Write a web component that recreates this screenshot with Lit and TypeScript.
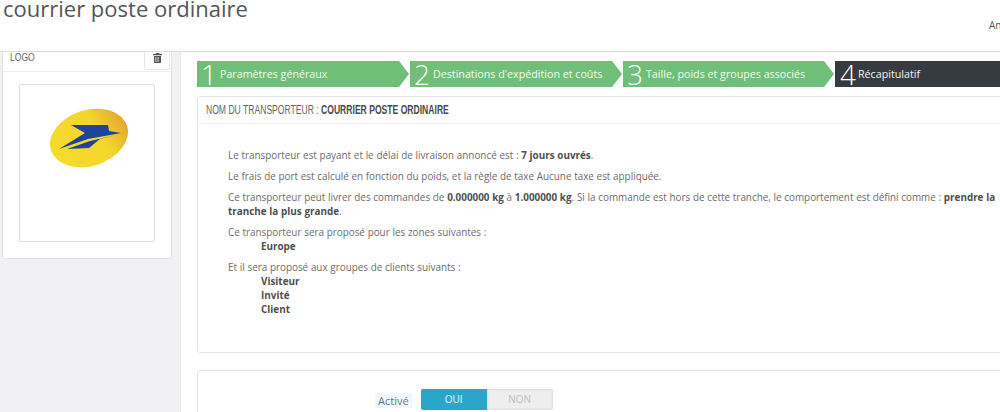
import { LitElement, html, css } from "lit";
import { customElement } from "lit/decorators.js";

@customElement("app-root")
export class AppRoot extends LitElement {
  static styles = css`
    :host {
      display: flex;
      flex-direction: column;
      width: 1000px;
      height: 412px;
      overflow: hidden;
      background: #fff;
      font-family: "Open Sans", sans-serif;
      font-size: 9.9px;
      color: #6c6c6c;
    }
    .top {
      height: 52px;
      flex: none;
      box-sizing: border-box;
      display: flex;
      justify-content: space-between;
      border-bottom: 1px solid #dcdcdc;
      overflow: hidden;
    }
    h1 {
      margin: 0 0 0 3px;
      font-size: 22px;
      line-height: 16px;
      font-weight: 400;
      color: #555;
    }
    .corner {
      width: 11px;
      white-space: nowrap;
      font-size: 10px;
      color: #555;
      padding-top: 18px;
    }
    .body {
      flex: 1;
      display: flex;
      min-height: 0;
    }
    aside {
      width: 181px;
      flex: none;
      box-sizing: border-box;
      background: #f1f1f3;
      border-right: 1px solid #e6e6e6;
      padding-left: 2px;
    }
    .logo-panel {
      width: 170px;
      height: 207px;
      box-sizing: border-box;
      background: #fff;
      border: 1px solid #e2e2e2;
      border-top: 0;
      border-radius: 0 0 3px 3px;
    }
    .logo-head {
      height: 19px;
      display: flex;
      justify-content: space-between;
      align-items: flex-start;
      border-bottom: 1px solid #eee;
      padding-left: 7px;
    }
    .logo-label {
      font-family: "Liberation Sans", sans-serif;
      font-size: 11px;
      line-height: 10px;
      color: #666;
      transform: scaleX(0.78);
      transform-origin: left center;
    }
    .trash {
      width: 24px;
      height: 11px;
      padding-bottom: 6px;
      margin-right: 1px;
      display: flex;
      align-items: center;
      justify-content: center;
      border: 1px solid #e8e8e8;
      border-top: 0;
      border-radius: 0 0 2px 2px;
    }
    .logo-box {
      margin: 12px 0 0 16px;
      width: 136px;
      height: 158px;
      box-sizing: border-box;
      border: 1px solid #dedede;
      border-radius: 2px;
      padding: 21px 0 0 28px;
    }
    .logo-box svg {
      display: block;
    }
    main {
      flex: 1;
      min-width: 0;
      overflow: hidden;
      padding: 9px 0 0 16px;
    }
    .steps {
      display: flex;
      gap: 1px;
      width: 830px;
      height: 26px;
    }
    .step {
      height: 26px;
      flex: none;
      box-sizing: border-box;
      display: flex;
      align-items: center;
      background: #6fbf78;
      color: #f2faf3;
      clip-path: polygon(0 0, calc(100% - 10px) 0, 100% 50%, calc(100% - 10px) 100%, 0 100%);
      font-size: 10.7px;
      padding-left: 4px;
      white-space: nowrap;
    }
    .step b {
      font-weight: 300;
      font-size: 28px;
      line-height: 26px;
      color: #fff;
      margin-right: 3px;
    }
    .step.dark {
      background: #363a41;
      clip-path: none;
      padding-left: 5px;
      color: #f5f5f5;
    }
    .step.dark b {
      margin-right: 2px;
    }
    .panel {
      width: 830px;
      box-sizing: border-box;
      border: 1px solid #e4e4e4;
      border-radius: 3px;
      background: #fff;
    }
    .summary {
      margin-top: 9px;
      height: 257px;
    }
    .panel-head {
      height: 27px;
      box-sizing: border-box;
      display: flex;
      align-items: center;
      padding-left: 8px;
      border-bottom: 1px solid #f0f0f0;
    }
    .panel-title {
      font-family: "Liberation Sans", sans-serif;
      font-size: 12px;
      color: #666;
      white-space: nowrap;
      transform: scaleX(0.715);
      transform-origin: left center;
    }
    .panel-title strong {
      color: #4a4a4a;
    }
    .text {
      padding: 24px 0 0 30px;
      line-height: 14px;
      word-spacing: 0.15px;
    }
    .text p {
      margin: 0 0 7px;
      white-space: nowrap;
    }
    .text strong {
      color: #4f4f4f;
    }
    .indent {
      display: block;
      padding-left: 33px;
    }
    .form {
      margin-top: 17px;
      height: 60px;
      padding: 18px 0 0 177px;
      display: flex;
      align-items: flex-start;
    }
    .label {
      background: #f1f7fb;
      padding: 0 3px;
      height: 15px;
      line-height: 15px;
      margin-top: 4px;
      font-size: 11px;
      color: #5f7d8c;
    }
    .switch {
      display: flex;
      margin-left: 9px;
      width: 132px;
      height: 21px;
      border-radius: 2px;
      overflow: hidden;
      font-size: 10px;
      line-height: 21px;
      text-align: center;
    }
    .yes {
      width: 66px;
      background: #2ba6cb;
      color: #e8f6fa;
    }
    .no {
      width: 66px;
      background: #eeeeee;
      color: #bdbdbd;
      box-shadow: inset 0 0 2px #bbb;
    }
  `;

  render() {
    return html`
      <div class="top">
        <h1>courrier poste ordinaire</h1>
        <div class="corner">An</div>
      </div>
      <div class="body">
        <aside>
          <div class="logo-panel">
            <div class="logo-head">
              <span class="logo-label">LOGO</span>
              <span class="trash">
                <svg width="9" height="10" viewBox="0 0 9 10">
                  <path fill="#555" d="M3 0h3l.5 1H9v1.200H0V1h2.500zM1 3h7v6.200q0 .8-.8.8H1.800q-.8 0-.8-.8zm1.500 1v5h.8V4zm2.200 0v5h.8V4z" />
                </svg>
              </span>
            </div>
            <div class="logo-box">
              <svg width="82" height="64" viewBox="0 0 82 64">
                <defs>
                  <linearGradient id="g" x1="0" x2="1" y1="0.6" y2="0.4">
                    <stop offset="0" stop-color="#f5dc2a" />
                    <stop offset="0.65" stop-color="#f3d62c" />
                    <stop offset="1" stop-color="#e2a632" />
                  </linearGradient>
                </defs>
                <ellipse cx="41" cy="32" rx="40" ry="28" transform="rotate(-18 41 32)" fill="url(#g)" />
                <path fill="#1d439c" d="M23 19H60L61 25L73 27L40 33L11 43L37 27ZM19 43L42 35L68 29L52 33L41 42Z" />
              </svg>
            </div>
          </div>
        </aside>
        <main>
          <div class="steps">
            <div class="step" style="width:212px"><b>1</b>Paramètres généraux</div>
            <div class="step" style="width:212px"><b>2</b>Destinations d'expédition et coûts</div>
            <div class="step" style="width:211px"><b>3</b>Taille, poids et groupes associés</div>
            <div class="step dark" style="width:200px"><b>4</b>Récapitulatif</div>
          </div>
          <div class="panel summary">
            <div class="panel-head"><span class="panel-title">NOM DU TRANSPORTEUR : <strong>COURRIER POSTE ORDINAIRE</strong></span></div>
            <div class="text">
              <p>Le transporteur est payant et le délai de livraison annoncé est : <strong>7 jours ouvrés</strong>.</p>
              <p>Le frais de port est calculé en fonction du poids, et la règle de taxe Aucune taxe est appliquée.</p>
              <p>Ce transporteur peut livrer des commandes de <strong>0.000000 kg</strong> à <strong>1.000000 kg</strong>. Si la commande est hors de cette tranche, le comportement est défini comme : <strong>prendre la<br />tranche la plus grande</strong>.</p>
              <p>Ce transporteur sera proposé pour les zones suivantes :<strong class="indent">Europe</strong></p>
              <p>Et il sera proposé aux groupes de clients suivants :<strong class="indent">Visiteur</strong><strong class="indent">Invité</strong><strong class="indent">Client</strong></p>
            </div>
          </div>
          <div class="panel form">
            <span class="label">Activé</span>
            <div class="switch"><span class="yes">OUI</span><span class="no">NON</span></div>
          </div>
        </main>
      </div>
    `;
  }
}
